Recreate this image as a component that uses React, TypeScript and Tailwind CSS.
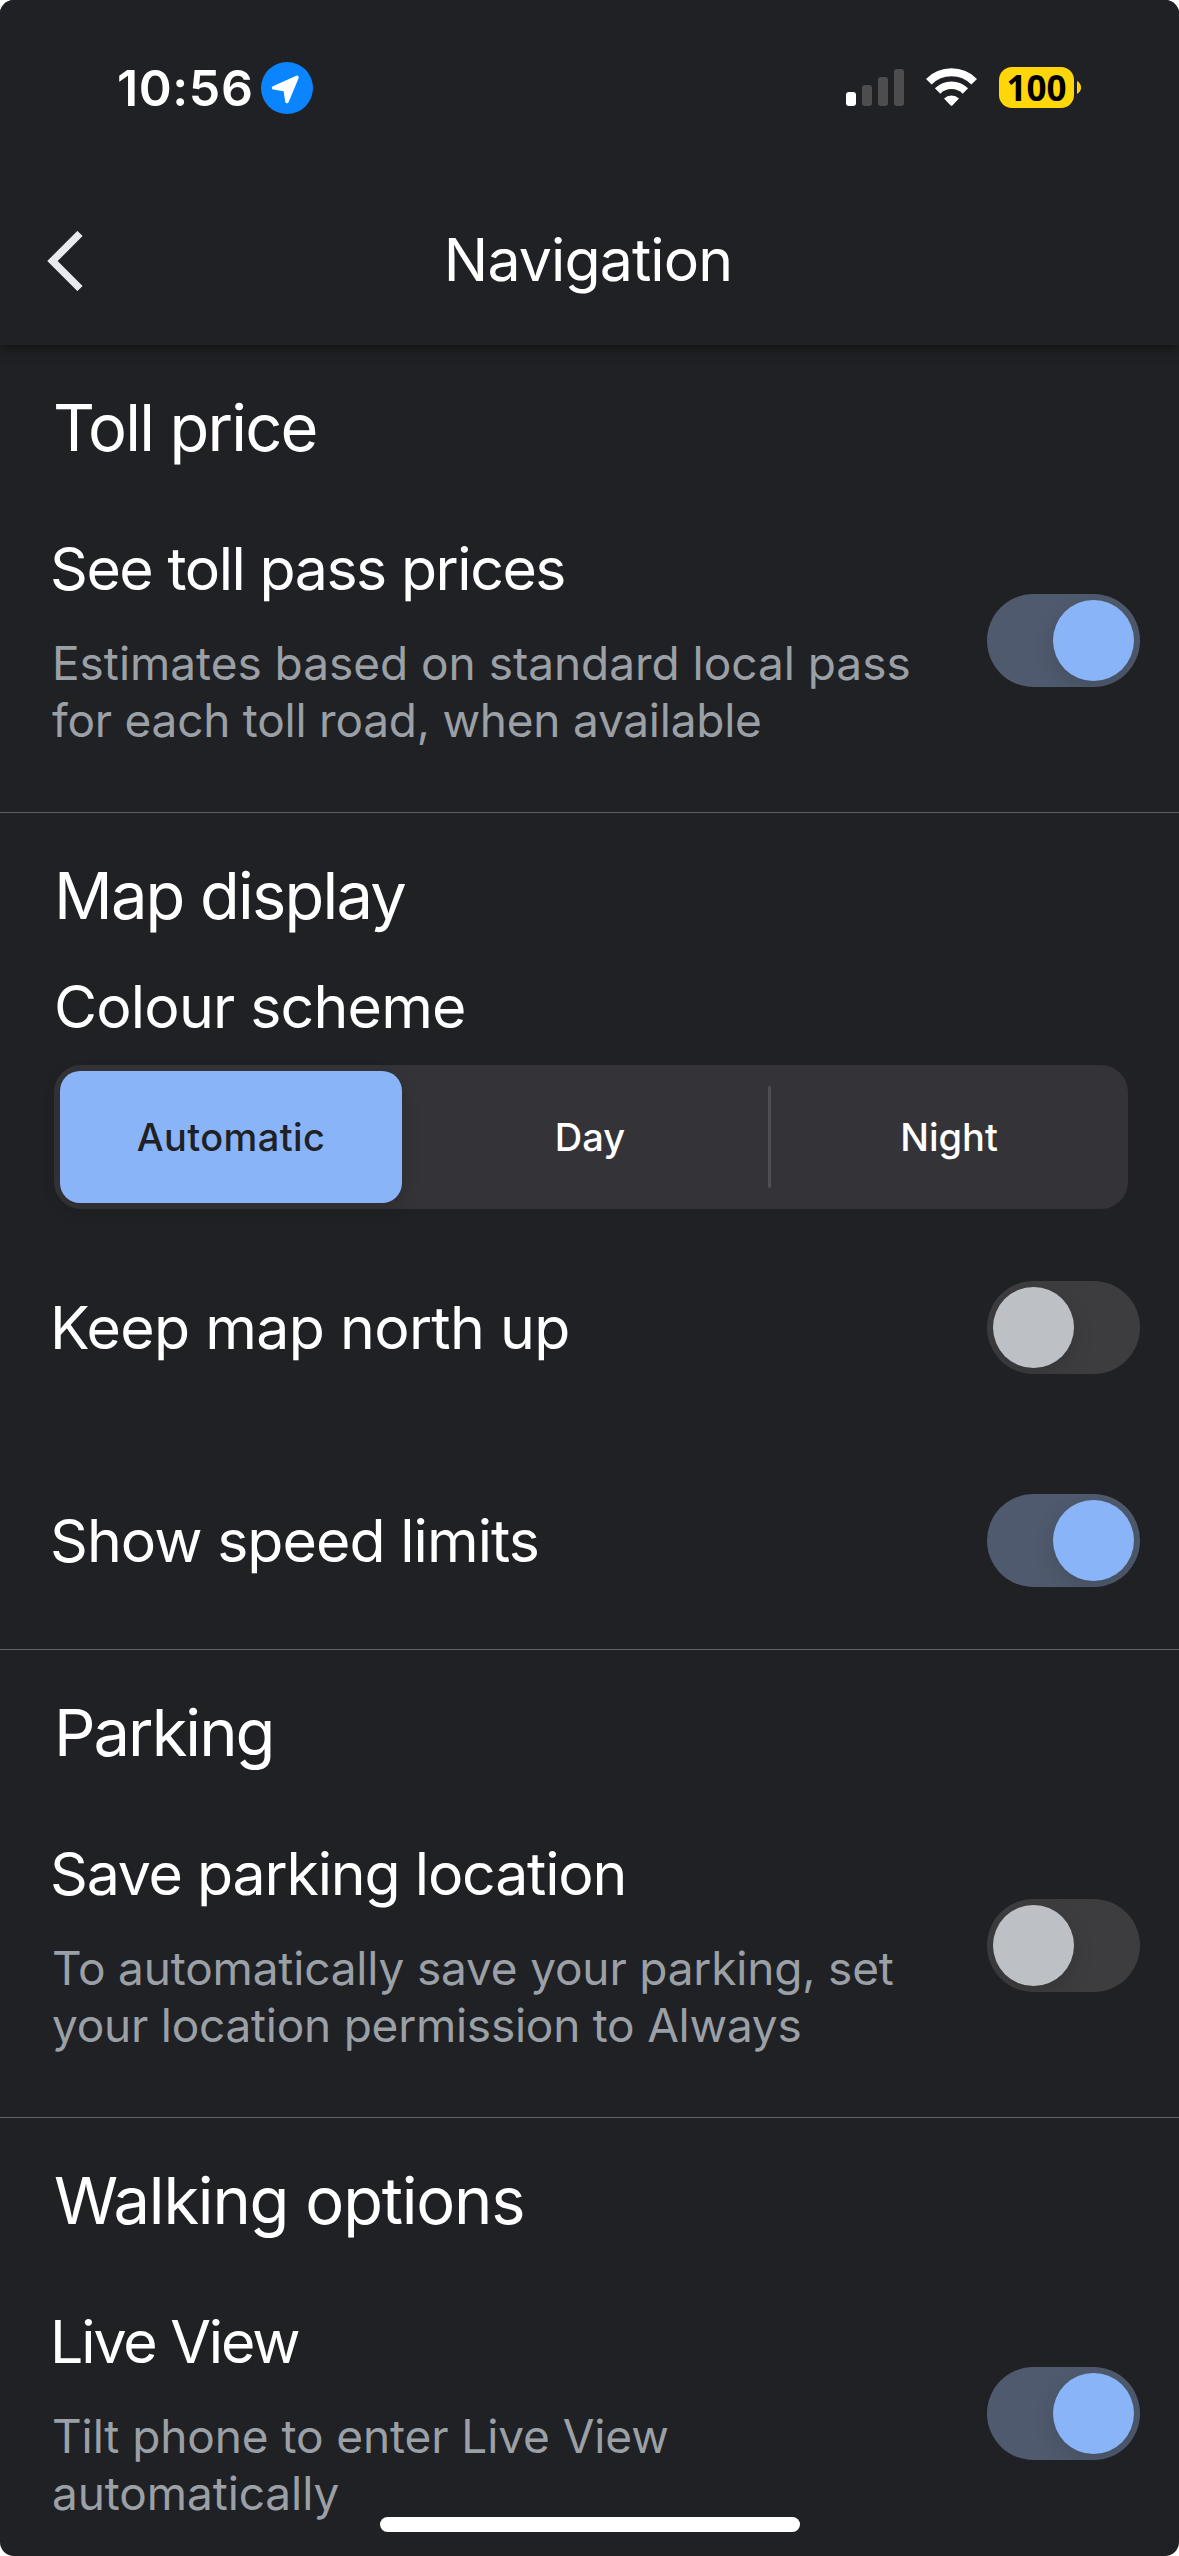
import clsx from "clsx";
import { useState } from "react";

const SCHEMES = ["Automatic", "Day", "Night"];

function StatusBar() {
  return (
    <div className="flex h-[177px] items-start justify-between pr-[98px] pl-[117px]">
      <div className="flex items-center gap-[7px] pt-[62px]">
        <span className="text-[50px] leading-[52px] font-semibold tracking-[0.6px] text-white">10:56</span>
        <svg width="52" height="52" viewBox="0 0 52 52">
          <circle cx="26" cy="26" r="26" fill="#0a84ff" />
          <path
            d="M36 15.4 L12.6 25.8 L24.2 27.8 L26 39.4 Z"
            fill="#fff"
            stroke="#fff"
            strokeWidth="3.6"
            strokeLinejoin="round"
          />
        </svg>
      </div>
      <div className="flex items-center gap-[22px] pt-[67px]">
        <svg width="58" height="41" viewBox="0 0 58 41">
          <rect x="0" y="25" width="10" height="14" rx="3" fill="#fff" />
          <rect x="16" y="18" width="10" height="21" rx="3" fill="#4d4d50" />
          <rect x="32" y="10" width="10" height="29" rx="3" fill="#4d4d50" />
          <rect x="48" y="2" width="10" height="37" rx="3" fill="#4d4d50" />
        </svg>
        <svg width="51" height="41" viewBox="0 0 51 41" fill="none">
          <path d="M2.8 14.8 A32 32 0 0 1 48.2 14.8" stroke="#fff" strokeWidth="8" />
          <path d="M11.6 24 A19.6 19.6 0 0 1 39.4 24" stroke="#fff" strokeWidth="7.6" />
          <path d="M18 31.5 A10.8 10.8 0 0 1 33 31.5 L26.3 38.4 Q25.5 39.2 24.7 38.4 Z" fill="#fff" />
        </svg>
        <div className="flex items-center gap-[3px]">
          <div className="flex h-[41px] w-[75px] items-center justify-center rounded-[13px] bg-[#ffd60a]">
            <span className="font-['Open_Sans',sans-serif] text-[35px] leading-[41px] font-bold text-black">
              100
            </span>
          </div>
          <svg width="4" height="13" viewBox="0 0 4 13">
            <path d="M0 0 C5.4 2.6 5.4 10.4 0 13 Z" fill="#ffd60a" />
          </svg>
        </div>
      </div>
    </div>
  );
}

function Header() {
  return (
    <header className="relative z-10 h-[345px] bg-[#202124] shadow-[0_2px_12px_rgba(0,0,0,0.55)]">
      <StatusBar />
      <div className="grid h-[168px] grid-cols-[200px_1fr_203px] items-center">
        <button aria-label="Back" className="pl-[47px]">
          <svg width="36" height="60" viewBox="0 0 36 60" fill="none">
            <path d="M33 2.5 L5.5 30 L33 57.5" stroke="#e8eaed" strokeWidth="7.4" />
          </svg>
        </button>
        <h1 className="pb-[2px] text-center text-[59px] leading-[72px] tracking-[-0.9px] text-white">
          Navigation
        </h1>
      </div>
    </header>
  );
}

function Toggle({ defaultOn = false, label }: { defaultOn?: boolean; label: string }) {
  const [on, setOn] = useState(defaultOn);
  return (
    <button
      role="switch"
      aria-checked={on}
      aria-label={label}
      onClick={() => setOn(!on)}
      className={clsx(
        "flex h-[93px] w-[153px] shrink-0 items-center overflow-hidden rounded-full px-[6px]",
        on ? "justify-end bg-[#4f5a6e]" : "justify-start bg-[#3d3d40]"
      )}
    >
      <span
        className={clsx(
          "h-[81px] w-[81px] rounded-full shadow-[0_8px_22px_rgba(0,0,0,0.12)]",
          on ? "bg-[#8ab4f8]" : "bg-[#bdc1c6]"
        )}
      />
    </button>
  );
}

type RowProps = {
  title: string;
  titleClass: string;
  lines?: { text: string; className: string }[];
  defaultOn?: boolean;
};

function SettingRow({ title, titleClass, lines, defaultOn }: RowProps) {
  return (
    <div
      className={clsx(
        "flex items-center justify-between pr-[39px] pl-[50px]",
        lines ? "mt-[2px] h-[343px]" : "h-[213px]"
      )}
    >
      <div>
        <h3 className={clsx("text-[59px] leading-[72px] text-white", titleClass)}>{title}</h3>
        {lines && (
          <p className="mt-[30px] pl-[2px] text-[46px] leading-[57px] text-[#9aa0a6]">
            {lines.map((l) => (
              <span key={l.text} className={clsx("block whitespace-nowrap", l.className)}>
                {l.text}
              </span>
            ))}
          </p>
        )}
      </div>
      <Toggle defaultOn={defaultOn} label={title} />
    </div>
  );
}

function SectionTitle({ children, className }: { children: string; className: string }) {
  return <h2 className={clsx("text-[65px] leading-[78px] text-white", className)}>{children}</h2>;
}

function ColourScheme() {
  const [active, setActive] = useState("Automatic");
  return (
    <div className="mt-[36px] pr-[51px] pl-[54px]">
      <h3 className="text-[59px] leading-[72px] tracking-[-0.8px] text-white">Colour scheme</h3>
      <div className="mt-[22px] flex h-[144px] items-center gap-[17px] rounded-[27px] bg-[#343438] p-[6px]">
        {SCHEMES.map((s) => (
          <button
            key={s}
            onClick={() => setActive(s)}
            className={clsx(
              "relative h-[132px] w-[342px] shrink-0 rounded-[20px] text-[38px] font-medium",
              s === "Automatic" && "tracking-[0.4px]",
              s === active
                ? "bg-[#8ab4f8] text-[#202124] shadow-[0_6px_18px_rgba(0,0,0,0.15)]"
                : "text-white"
            )}
          >
            {s}
            {s === "Night" && active === "Automatic" && (
              <span className="absolute top-[15px] -left-[10px] h-[102px] w-[3px] rounded-full bg-[#4e4e53]" />
            )}
          </button>
        ))}
      </div>
    </div>
  );
}

export default function App() {
  return (
    <div className="w-[1179px] bg-white">
      <div className="relative h-[2556px] overflow-hidden rounded-[14px] bg-[#202124] font-['Inter',sans-serif]">
        <Header />
        <main>
          <section className="pt-[44px]">
            <SectionTitle className="pl-[53px] tracking-[-1.8px]">Toll price</SectionTitle>
            <SettingRow
              title="See toll pass prices"
              titleClass="tracking-[-1.45px]"
              defaultOn
              lines={[
                { text: "Estimates based on standard local pass", className: "tracking-[-0.03px]" },
                { text: "for each toll road, when available", className: "tracking-[-0.24px]" },
              ]}
            />
          </section>
          <section className="border-t border-[#5f6368] pt-[44px] pb-[2px]">
            <SectionTitle className="pl-[54px] tracking-[-1.8px]">Map display</SectionTitle>
            <ColourScheme />
            <div className="pt-[12px]">
              <SettingRow title="Keep map north up" titleClass="tracking-[-0.7px]" />
              <SettingRow title="Show speed limits" titleClass="tracking-[-0.95px]" defaultOn />
            </div>
          </section>
          <section className="border-t border-[#5f6368] pt-[44px]">
            <SectionTitle className="pl-[54px] tracking-[-1.95px]">Parking</SectionTitle>
            <SettingRow
              title="Save parking location"
              titleClass="tracking-[-1.2px]"
              lines={[
                { text: "To automatically save your parking, set", className: "tracking-[-0.18px]" },
                { text: "your location permission to Always", className: "tracking-[-0.25px]" },
              ]}
            />
          </section>
          <section className="border-t border-[#5f6368] pt-[44px]">
            <SectionTitle className="pl-[54px] tracking-[-1.2px]">Walking options</SectionTitle>
            <SettingRow
              title="Live View"
              titleClass="tracking-[-2.1px]"
              defaultOn
              lines={[
                { text: "Tilt phone to enter Live View", className: "tracking-[-0.1px]" },
                { text: "automatically", className: "tracking-[-0.1px]" },
              ]}
            />
          </section>
        </main>
        {/* home indicator */}
        <div className="absolute bottom-[24px] left-[380px] h-[15px] w-[420px] rounded-full bg-white" />
      </div>
    </div>
  );
}
